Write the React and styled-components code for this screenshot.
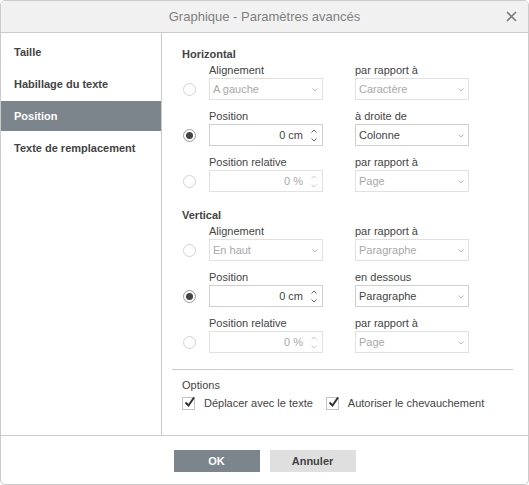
import styled, { createGlobalStyle } from "styled-components";

const Global = createGlobalStyle`
  html, body { margin: 0; padding: 0; background: #ffffff; }
  body { font-family: "Liberation Sans", Arial, sans-serif; font-size: 11px; color: #444444; }
  * { box-sizing: border-box; }
`

const menu = ["Taille", "Habillage du texte", "Position", "Texte de remplacement"]

const horizontal = [
  { label: "Alignement", value: "A gauche", kind: "select", side: "par rapport à", sideValue: "Caractère", on: false },
  { label: "Position", value: "0 cm", kind: "spin", side: "à droite de", sideValue: "Colonne", on: true },
  { label: "Position relative", value: "0 %", kind: "spin", side: "par rapport à", sideValue: "Page", on: false },
]

const vertical = [
  { label: "Alignement", value: "En haut", kind: "select", side: "par rapport à", sideValue: "Paragraphe", on: false },
  { label: "Position", value: "0 cm", kind: "spin", side: "en dessous", sideValue: "Paragraphe", on: true },
  { label: "Position relative", value: "0 %", kind: "spin", side: "par rapport à", sideValue: "Page", on: false },
]

function Chevron({ up }) {
  return (
    <svg width="6" height="4" viewBox="0 0 6 4">
      <path d={up ? "M0.5 3.5 L3 1 L5.5 3.5" : "M0.5 0.5 L3 3 L5.5 0.5"} fill="none" stroke="currentColor" strokeWidth="0.9" />
    </svg>
  )
}

function Field({ value, kind, disabled }) {
  return (
    <Box $disabled={disabled} $spin={kind === "spin"}>
      <span>{value}</span>
      {kind === "spin" ? (
        <Spin $disabled={disabled}><Chevron up /><Chevron /></Spin>
      ) : (
        <Arrow><Chevron /></Arrow>
      )}
    </Box>
  )
}

function Section({ title, rows }) {
  return (
    <>
      <SectionTitle>{title}</SectionTitle>
      {rows.map((r, i) => (
        <Row key={i}>
          <span />
          <Label>{r.label}</Label>
          <Label $side>{r.side}</Label>
          <Radio $on={r.on} />
          <Field value={r.value} kind={r.kind} disabled={!r.on} />
          <SideCell><Field value={r.sideValue} kind="select" disabled={!r.on} /></SideCell>
        </Row>
      ))}
    </>
  )
}

function Check({ text }) {
  return (
    <CheckItem>
      <CheckBox>
        <svg width="14" height="14" viewBox="0 0 14 14">
          <path d="M2.5 7.5 L5.5 10.5 L11 2.5" fill="none" stroke="#333333" strokeWidth="2" />
        </svg>
      </CheckBox>
      {text}
    </CheckItem>
  )
}

export default function App() {
  return (
    <Dialog>
      <Global />
      <Header>
        Graphique - Paramètres avancés
        <Close>
          <svg width="11" height="11" viewBox="0 0 11 11">
            <path d="M1 1 L10 10 M10 1 L1 10" stroke="#7d7d7d" strokeWidth="1.6" />
          </svg>
        </Close>
      </Header>
      <Body>
        <Sidebar>
          {menu.map(m => <MenuItem key={m} $active={m === "Position"}>{m}</MenuItem>)}
        </Sidebar>
        <Content>
          <Section title="Horizontal" rows={horizontal} />
          <Spacer />
          <Section title="Vertical" rows={vertical} />
          <Separator />
          <SectionTitle $plain>Options</SectionTitle>
          <Checks>
            <Check text="Déplacer avec le texte" />
            <Check text="Autoriser le chevauchement" />
          </Checks>
        </Content>
      </Body>
      <Footer>
        <Button $primary>OK</Button>
        <Button>Annuler</Button>
      </Footer>
    </Dialog>
  )
}

const Dialog = styled.div`
  width: 529px;
  height: 485px;
  border: 1px solid #cbcbcb;
  border-radius: 5px;
  overflow: hidden;
  display: flex;
  flex-direction: column;
  background: #ffffff;
`
const Header = styled.div`
  position: relative;
  height: 32px;
  flex-shrink: 0;
  background: #f1f1f1;
  border-bottom: 1px solid #cbcbcb;
  display: flex;
  align-items: center;
  justify-content: center;
  font-size: 13px;
  color: #7f7f7f;
`
const Close = styled.div`
  position: absolute;
  right: 11px;
  top: 10px;
  display: flex;
`
const Body = styled.div`
  flex: 1;
  display: flex;
`
const Sidebar = styled.div`
  width: 161px;
  flex-shrink: 0;
  border-right: 1px solid #cbcbcb;
  padding-top: 4px;
  display: flex;
  flex-direction: column;
  gap: 2px;
`
const MenuItem = styled.div`
  height: 30px;
  display: flex;
  align-items: center;
  padding-left: 13px;
  font-weight: bold;
  font-size: 11px;
  color: ${p => p.$active ? "#ffffff" : "#444444"};
  background: ${p => p.$active ? "#7d858c" : "transparent"};
`
const Content = styled.div`
  flex: 1;
  padding: 14px 15px 0 20px;
  display: flex;
  flex-direction: column;
`
const SectionTitle = styled.div`
  line-height: 14px;
  font-weight: ${p => p.$plain ? "normal" : "bold"};
  color: #444444;
  margin-bottom: 2px;
`
const Spacer = styled.div`
  height: 7px;
`
const Row = styled.div`
  display: grid;
  grid-template-columns: 27px 114px 146px;
  grid-template-rows: 14px 22px;
  row-gap: 1px;
  margin-bottom: 9px;
`
const Label = styled.div`
  line-height: 14px;
  color: #444444;
  white-space: nowrap;
  padding-left: ${p => p.$side ? "32px" : "0"};
`
const SideCell = styled.div`
  padding-left: 32px;
`
const Radio = styled.div`
  align-self: center;
  margin-left: 1px;
  width: 13px;
  height: 13px;
  border-radius: 50%;
  border: 1px solid ${p => p.$on ? "#9a9a9a" : "#d3d3d3"};
  display: flex;
  align-items: center;
  justify-content: center;
  &::after {
    content: "";
    display: ${p => p.$on ? "block" : "none"};
    width: 7px;
    height: 7px;
    border-radius: 50%;
    background: #444444;
  }
`
const Box = styled.div`
  position: relative;
  height: 22px;
  border: 1px solid ${p => p.$disabled ? "#e1e1e1" : "#cfcfcf"};
  display: flex;
  align-items: center;
  justify-content: ${p => p.$spin ? "flex-end" : "flex-start"};
  padding: ${p => p.$spin ? "0 19px 0 0" : "0 0 0 3px"};
  color: ${p => p.$disabled ? "#a8a8a8" : "#444444"};
  font-size: 11px;
`
const Arrow = styled.div`
  position: absolute;
  right: 4px;
  top: 9px;
  display: flex;
  color: #b0b0b0;
`
const Spin = styled.div`
  position: absolute;
  right: 5px;
  top: 4px;
  display: flex;
  flex-direction: column;
  gap: 5px;
  color: ${p => p.$disabled ? "#c8c8c8" : "#555555"};
`
const Separator = styled.div`
  height: 1px;
  background: #cbcbcb;
  margin: 7px 0 8px -10px;
`
const Checks = styled.div`
  display: flex;
  gap: 13px;
  margin-top: 2px;
`
const CheckItem = styled.div`
  display: flex;
  align-items: center;
  gap: 9px;
  line-height: 14px;
  color: #444444;
`
const CheckBox = styled.div`
  position: relative;
  width: 13px;
  height: 13px;
  border: 1px solid #c4c4c4;
  & > svg { position: absolute; left: 0; top: -3px; }
`
const Footer = styled.div`
  height: 49px;
  flex-shrink: 0;
  border-top: 1px solid #cbcbcb;
  display: flex;
  justify-content: center;
  gap: 10px;
  padding-top: 14px;
`
const Button = styled.div`
  width: 86px;
  height: 22px;
  display: flex;
  align-items: center;
  justify-content: center;
  font-weight: bold;
  font-size: 11px;
  background: ${p => p.$primary ? "#7d858c" : "#dfdfdf"};
  color: ${p => p.$primary ? "#ffffff" : "#444444"};
`
